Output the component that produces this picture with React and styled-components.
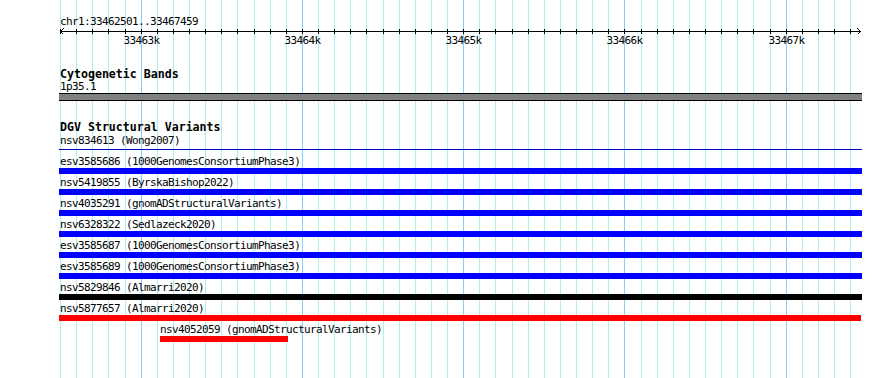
import React from "react";
import styled, { createGlobalStyle } from "styled-components";

// view geometry (px relative to the left edge of the track area)
const VIEW_WIDTH = 803;
const PX_PER_BP = 0.16125;
const ORIGIN_BP = 33463000;
const ORIGIN_X = 82.2;

const toX = (bp) => ORIGIN_X + (bp - ORIGIN_BP) * PX_PER_BP;
const clamp = (v) => Math.max(0, Math.min(VIEW_WIDTH, v));

const ticks = [];
for (let bp = 33462500; bp <= 33467400; bp += 100) {
    ticks.push({ bp, x: Math.floor(toX(bp)) + 0.5, major: bp % 1000 === 0 });
}

const features = [
    { id: "nsv834613", source: "Wong2007", start: 33460000, end: 33470000, color: "#0000c8", thin: true },
    { id: "esv3585686", source: "1000GenomesConsortiumPhase3", start: 33460000, end: 33470000, color: "#0000ff" },
    { id: "nsv5419855", source: "ByrskaBishop2022", start: 33460000, end: 33470000, color: "#0000ff" },
    { id: "nsv4035291", source: "gnomADStructuralVariants", start: 33460000, end: 33470000, color: "#0000ff" },
    { id: "nsv6328322", source: "Sedlazeck2020", start: 33460000, end: 33470000, color: "#0000ff" },
    { id: "esv3585687", source: "1000GenomesConsortiumPhase3", start: 33460000, end: 33470000, color: "#0000ff" },
    { id: "esv3585689", source: "1000GenomesConsortiumPhase3", start: 33460000, end: 33470000, color: "#0000ff" },
    { id: "nsv5829846", source: "Almarri2020", start: 33460000, end: 33470000, color: "#000000" },
    { id: "nsv5877657", source: "Almarri2020", start: 33460000, end: 33467464, color: "#ff0000" },
    { id: "nsv4052059", source: "gnomADStructuralVariants", start: 33463117, end: 33463910, color: "#ff0000" },
];

const GlobalStyle = createGlobalStyle`
    html, body {
        margin: 0;
        padding: 0;
        background: #fff;
    }
    body {
        font-family: "DejaVu Sans Mono", monospace;
        color: #000;
    }
`;

const Page = styled.div`
    position: relative;
    width: 890px;
    height: 378px;
    overflow: hidden;
    padding-left: 59px;
    box-sizing: border-box;
`;

const GridLayer = styled.svg`
    position: absolute;
    left: 59px;
    top: 0;
    width: ${VIEW_WIDTH}px;
    height: 378px;
    z-index: 0;
`;

const View = styled.div`
    position: relative;
    z-index: 1;
    width: ${VIEW_WIDTH}px;
    display: flex;
    flex-direction: column;
`;

const Location = styled.div`
    padding: 16px 0 0 1px;
    height: 12px;
    font-size: 11px;
    letter-spacing: -0.62px;
    line-height: 12px;
    white-space: nowrap;
`;

const Scale = styled.svg`
    display: block;
    width: ${VIEW_WIDTH}px;
    height: 20px;
    overflow: visible;
    font-family: "DejaVu Sans Mono", monospace;
    font-size: 11px;
    letter-spacing: -0.62px;
`;

const TrackTitle = styled.div`
    margin-top: ${(p) => p.$gap}px;
    padding: ${(p) => p.$pad}px 0 0 1px;
    height: ${(p) => p.$height}px;
    font-size: 11.6px;
    font-weight: bold;
    line-height: ${(p) => p.$height}px;
    white-space: nowrap;
`;

const BandName = styled.div`
    padding-left: 1px;
    height: 11px;
    font-size: 11px;
    letter-spacing: -0.62px;
    line-height: 11px;
`;

const Band = styled.div`
    margin-top: 1px;
    height: 6px;
    background: #808080;
    border-top: 1px solid #000;
    border-bottom: 1px solid #000;
`;

const FeatureRow = styled.div`
    display: flex;
    flex-direction: column;
    margin-bottom: 1px;
`;

const FeatureLabel = styled.div`
    padding-top: 1px;
    height: 13px;
    font-size: 11px;
    letter-spacing: -0.62px;
    line-height: 13px;
    white-space: nowrap;
`;

const FeatureSlot = styled.div`
    height: 6px;
    display: flex;
    align-items: ${(p) => (p.$thin ? "flex-start" : "stretch")};
`;

const FeatureBar = styled.div`
    height: ${(p) => (p.$thin ? "1px" : "6px")};
    margin-top: ${(p) => (p.$thin ? "2px" : "0")};
    background: ${(p) => p.$color};
`;

const Gridlines = () => (
    <GridLayer shapeRendering="crispEdges">
        {ticks.map((t) => (
            <line
                key={t.bp}
                x1={t.x}
                x2={t.x}
                y1={0}
                y2={378}
                stroke={t.major ? "#87cefa" : "#afeeee"}
                strokeWidth={1}
            />
        ))}
    </GridLayer>
);

const Ruler = () => (
    <>
        <Location>chr1:33462501..33467459</Location>
        <Scale shapeRendering="crispEdges">
            <line x1={1} x2={802} y1={3.5} y2={3.5} stroke="#000" />
            <polyline points="4.5,0.5 1.5,3.5 4.5,6.5" fill="none" stroke="#000" />
            <polyline points="798.5,0.5 801.5,3.5 798.5,6.5" fill="none" stroke="#000" />
            {ticks.map((t) => (
                <line key={t.bp} x1={t.x} x2={t.x} y1={1} y2={6} stroke="#000" />
            ))}
            {ticks
                .filter((t) => t.major)
                .map((t) => (
                    <text key={t.bp} x={t.x} y={16} textAnchor="middle" fill="#000">
                        {`${t.bp / 1000}k`}
                    </text>
                ))}
        </Scale>
    </>
);

const Feature = ({ feature }) => {
    const left = Math.round(clamp(toX(feature.start)));
    const right = Math.round(clamp(toX(feature.end)));
    return (
        <FeatureRow>
            <FeatureLabel style={{ marginLeft: Math.max(left, 1) }}>
                {feature.id} ({feature.source})
            </FeatureLabel>
            <FeatureSlot $thin={feature.thin}>
                <FeatureBar
                    $thin={feature.thin}
                    $color={feature.color}
                    style={{ marginLeft: left, width: right - left }}
                />
            </FeatureSlot>
        </FeatureRow>
    );
};

const App = () => {
    return (
        <>
            <GlobalStyle />
            <Page>
                <Gridlines />
                <View>
                    <Ruler />
                    <TrackTitle $gap={19} $pad={0} $height={14}>Cytogenetic Bands</TrackTitle>
                    <BandName>1p35.1</BandName>
                    <Band />
                    <TrackTitle $gap={20} $pad={1} $height={11}>DGV Structural Variants</TrackTitle>
                    {features.map((f) => (
                        <Feature key={f.id} feature={f} />
                    ))}
                </View>
            </Page>
        </>
    );
};

export default App;
